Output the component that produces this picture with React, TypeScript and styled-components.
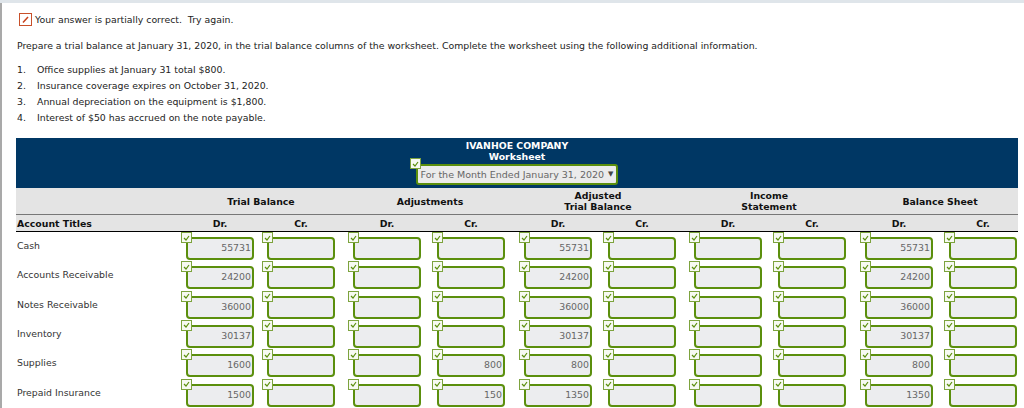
import React from 'react';
import styled, { createGlobalStyle } from 'styled-components';

const GlobalStyle = createGlobalStyle`
  html, body {
    margin: 0;
    padding: 0;
    height: 408px;
    overflow: hidden;
    background: #fff;
  }
  body {
    font-family: "DejaVu Sans", Verdana, sans-serif;
    font-size: 9.35px;
    color: #222;
  }
`

const TopBar = styled.div`
  height: 3px;
  background: #dfe5ea;
`

const Page = styled.div`
  border-left: 2px solid #a9a9a9;
  padding: 8px 6px 0 14px;
`

const Feedback = styled.div`
  display: flex;
  align-items: center;
  gap: 3px;
  height: 16px;
  margin-left: 3px;
`

const Instructions = styled.p`
  margin: 12px 0 0 1px;
  line-height: 13px;
`

const Notes = styled.ol`
  margin: 9px 0 0 1px;
  padding: 0;
  list-style: none;
`

const Note = styled.li`
  display: flex;
  height: 16px;
  align-items: center;
  span:first-child {
    width: 20px;
  }
`

const Sheet = styled.div`
  margin-top: 13px;
`

const Banner = styled.div`
  height: 50px;
  background: #003764;
  color: #fff;
  font-weight: 700;
  text-align: center;
  line-height: 11px;
  padding-top: 2px;
  box-sizing: border-box;
`

const PeriodWrap = styled.div`
  position: relative;
  display: inline-block;
  margin-top: 2px;
`

const Period = styled.div`
  display: flex;
  align-items: center;
  gap: 4px;
  height: 17px;
  padding: 0 3px;
  background: #ebebeb;
  border: 2px solid #5b8f0d;
  border-radius: 3px;
  color: #666;
  font-size: 9.5px;
  font-weight: 400;
`

const Arrow = styled.span`
  font-size: 7px;
  color: #444;
`

const Columns = '165px 81px 86px 84px 87px 84px 86px 84px 87px 84px 75px';

const GroupRow = styled.div`
  display: grid;
  grid-template-columns: 165px 160px 178px 158px 184px 158px;
  height: 27px;
  align-items: center;
  background: #e4e4e4;
  border-bottom: 1px solid #777;
  box-sizing: border-box;
  color: #111;
  font-weight: 700;
  text-align: center;
  line-height: 11px;
`

const GroupTitle = styled.div`
  white-space: pre-line;
`

const TitleRow = styled.div`
  display: grid;
  grid-template-columns: ${Columns};
  height: 17px;
  align-items: center;
  background: #e4e4e4;
  border-bottom: 1px solid #000;
  box-sizing: border-box;
  color: #111;
  font-weight: 700;
`

const AccountHead = styled.div`
  padding-left: 1px;
`

const TitleCell = styled.div`
  width: 68px;
  margin-left: 5px;
  text-align: center;
`

const Row = styled.div`
  display: grid;
  grid-template-columns: ${Columns};
  height: 29.33px;
`

const Label = styled.div`
  padding: 8px 0 0 1px;
  color: #333;
`

const Cell = styled.div`
  position: relative;
  padding: 5px 0 0 5px;
`

const Field = styled.div`
  width: 68px;
  height: 23px;
  box-sizing: border-box;
  background: #ecedef;
  border: 2px solid #5b8f0d;
  border-radius: 4px;
  color: #666;
  text-align: right;
  line-height: 17px;
  padding-right: 1px;
  font-size: 9.4px;
`

const Badge = styled.span<{ $inBanner?: boolean }>`
  position: absolute;
  top: ${props => (props.$inBanner ? '-6px' : '0')};
  left: ${props => (props.$inBanner ? '-6px' : '0')};
  width: 9px;
  height: 9px;
  background: #f7faf2;
  border: 1px solid #7da33e;
  display: flex;
  align-items: center;
  justify-content: center;
`

const Check = () => (
  <svg width="7" height="6" viewBox="0 0 7 6">
    <path d="M1 3l2 2 3-4" fill="none" stroke="#5b8f0d" strokeWidth="1.2" />
  </svg>
)

const groups = ['Trial Balance', 'Adjustments', 'Adjusted\nTrial Balance', 'Income\nStatement', 'Balance Sheet'];

const rows: { name: string; values: string[] }[] = [
  { name: 'Cash', values: ['55731', '', '', '', '55731', '', '', '', '55731', ''] },
  { name: 'Accounts Receivable', values: ['24200', '', '', '', '24200', '', '', '', '24200', ''] },
  { name: 'Notes Receivable', values: ['36000', '', '', '', '36000', '', '', '', '36000', ''] },
  { name: 'Inventory', values: ['30137', '', '', '', '30137', '', '', '', '30137', ''] },
  { name: 'Supplies', values: ['1600', '', '', '800', '800', '', '', '', '800', ''] },
  { name: 'Prepaid Insurance', values: ['1500', '', '', '150', '1350', '', '', '', '1350', ''] },
  { name: '', values: ['', '', '', '', '', '', '', '', '', ''] },
];

const notes = [
  'Office supplies at January 31 total $800.',
  'Insurance coverage expires on October 31, 2020.',
  'Annual depreciation on the equipment is $1,800.',
  'Interest of $50 has accrued on the note payable.',
];

const App: React.FC = () => (
  <>
    <GlobalStyle />
    <TopBar />
    <Page>
      <Feedback>
        <svg width="13" height="13" viewBox="0 0 13 13">
          <rect x="0.5" y="0.5" width="12" height="12" fill="#fff" stroke="#c8502a" />
          <path d="M4 9.5L9 4" stroke="#c8401a" strokeWidth="1.5" />
        </svg>
        <span>Your answer is partially correct.&nbsp; Try again.</span>
      </Feedback>
      <Instructions>
        Prepare a trial balance at January 31, 2020, in the trial balance columns of the worksheet. Complete the worksheet using the following additional information.
      </Instructions>
      <Notes>
        {notes.map((note, index) => (
          <Note key={index}>
            <span>{index + 1}.</span>
            <span>{note}</span>
          </Note>
        ))}
      </Notes>
      <Sheet>
        <Banner>
          <div>IVANHOE COMPANY</div>
          <div>Worksheet</div>
          <PeriodWrap>
            <Badge $inBanner><Check /></Badge>
            <Period>
              For the Month Ended January 31, 2020 <Arrow>▼</Arrow>
            </Period>
          </PeriodWrap>
        </Banner>
        <GroupRow>
          <div />
          {groups.map(group => (
            <GroupTitle key={group}>{group}</GroupTitle>
          ))}
        </GroupRow>
        <TitleRow>
          <AccountHead>Account Titles</AccountHead>
          {rows[0].values.map((_, index) => (
            <TitleCell key={index}>{index % 2 === 0 ? 'Dr.' : 'Cr.'}</TitleCell>
          ))}
        </TitleRow>
        {rows.map((row, rowIndex) => (
          <Row key={rowIndex}>
            <Label>{row.name}</Label>
            {row.values.map((value, index) => (
              <Cell key={index}>
                <Badge><Check /></Badge>
                <Field>{value}</Field>
              </Cell>
            ))}
          </Row>
        ))}
      </Sheet>
    </Page>
  </>
)

export default App;
